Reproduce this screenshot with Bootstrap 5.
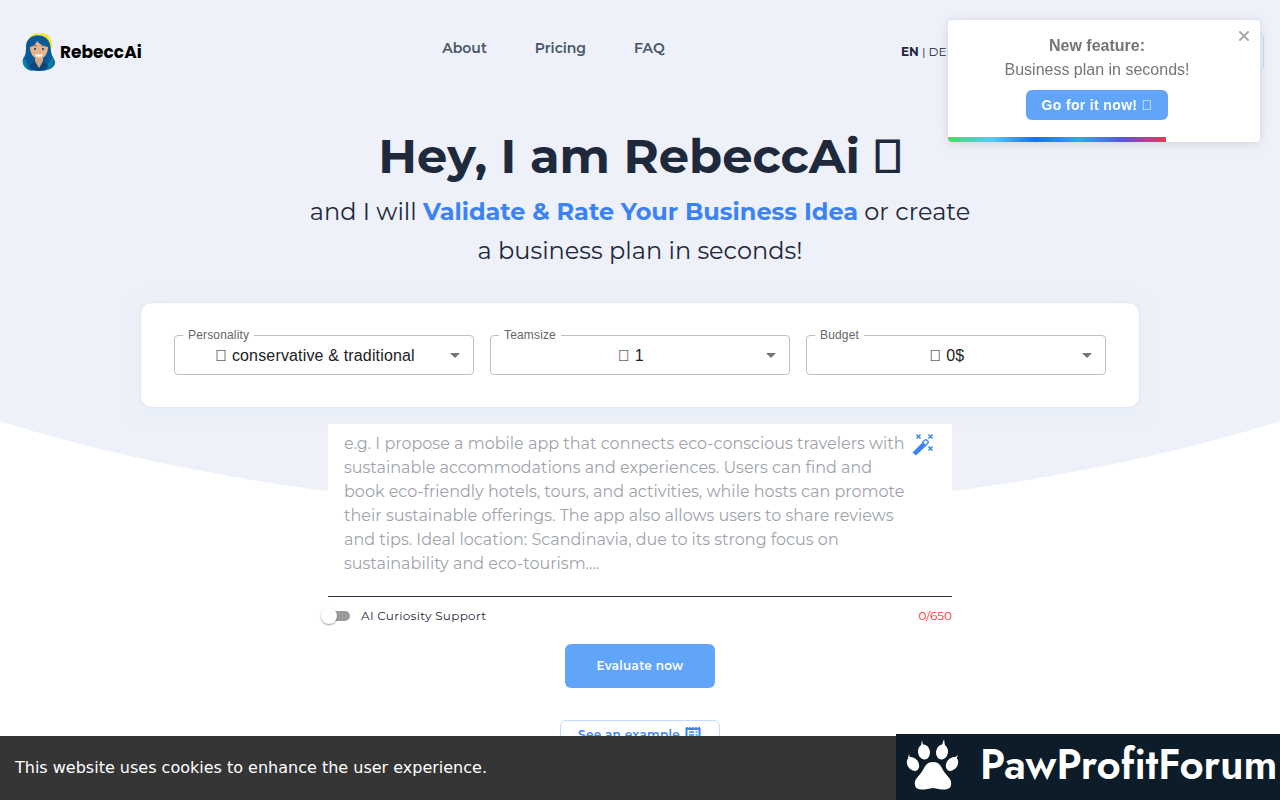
<!DOCTYPE html>
<html lang="en">
<head>
<meta charset="utf-8">
<meta name="viewport" content="width=device-width, initial-scale=1">
<title>RebeccAi</title>
<link href="https://cdn.jsdelivr.net/npm/bootstrap@5.3.0/dist/css/bootstrap.min.css" rel="stylesheet">
<style>
  body { font-family: Montserrat, Inter, sans-serif; color: #1e293b; background: #fff; }
  .page { position: relative; isolation: isolate; min-height: 100vh; }
  .page::before { content: ""; position: absolute; inset: 0 0 auto; height: 511px; z-index: -1; background: #eef1f9; clip-path: ellipse(88.3% 511px at 50% 0); }
  .site-header { height: 104px; }
  .brand-link { width: 190px; padding-left: 6px; gap: 4px; color: #000; font: 700 17px/24px Poppins, Inter, sans-serif; }
  .main-nav { gap: 48px; font-size: 14px; line-height: 24px; font-weight: 600; margin-bottom: 8px; }
  .main-nav a { color: #475569; }
  .account-area { width: 363px; font-size: 12px; }
  .account-area a { color: #1e293b; }
  .btn-account { width: 112px; height: 38px; border: 1px solid #bfdbfe; border-radius: 6px; }
  .arimo { font-family: "Liberation Sans", Arial, sans-serif; }
  .headline { font-size: 48px; line-height: 56px; font-weight: 700; }
  .subline { font-size: 24px; line-height: 39px; max-width: 670px; }
  .subline strong { color: #3b82f6; }
  .options-card { max-width: 1000px; margin-top: 32px; padding: 32px 33px; border: 1px solid #e2e6ee; border-radius: 12px; box-shadow: 0 4px 16px #dbeafe80; letter-spacing: .01em; }
  .options-card .col { position: relative; }
  .options-card label { position: absolute; top: -9px; left: 17px; padding: 0 5px; background: #fff; color: #666; font-size: 12px; line-height: 18px; }
  .options-card select { height: 40px; padding: 2px 32px 0 14px; border: 1px solid #c0c0c0; border-radius: 4px; color: #212121; font-size: 16px; letter-spacing: inherit; text-align-last: center; background-image: url("data:image/svg+xml,%3Csvg xmlns='http://www.w3.org/2000/svg' viewBox='0 0 24 24'%3E%3Cpath fill='%23757575' d='M7 10l5 5 5-5z'/%3E%3C/svg%3E"); background-size: 24px; background-position: right 6px center; }
  .idea-form { max-width: 624px; }
  .idea-form textarea { height: 173px; padding: 8px 40px 0 16px; border: 0; border-bottom: 1px solid #2c2c46; border-radius: 0; resize: none; overflow: hidden; font-size: 16px; line-height: 24px; }
  .idea-form textarea::placeholder { color: #a0a3ab; }
  .btn-wand { top: 8px; right: 17px; width: 24px; height: 24px; line-height: 0; }
  .form-notes { font-size: 12px; line-height: 24px; padding-top: 7px; }
  .curiosity { appearance: none; position: relative; width: 28px; height: 10px; margin: 0 11px 0 -6px; border-radius: 5px; background: #9b9b9b; }
  .curiosity::before { content: ""; position: absolute; left: -1px; top: -3px; width: 16px; height: 16px; border-radius: 50%; background: #fff; box-shadow: 0 1px 2px #0006; }
  .curiosity:checked::before { left: 13px; }
  .counter { color: #ff2a2a; }
  .btn-soft, .btn-example, .form-notes label { letter-spacing: .025em; }
  .btn-soft { background: #60a5fa; color: #fff; border: 0; border-radius: 6px; }
  .btn-evaluate { width: 150px; height: 44px; font-size: 12px; font-weight: 600; }
  .btn-example { width: 160px; height: 40px; margin-top: 32px; padding: 2px 0 0; border: 1px solid #bfdbfe; border-radius: 6px; color: #3b82f6; background: #fff; font-size: 12px; line-height: 24px; font-weight: 600; }
  .feature-toast { width: 312px; padding: 14px 14px 22px 0; margin: 20px; color: #757575; background: #fff; border-radius: 4px; box-shadow: 0 1px 10px #0000001a, 0 2px 15px #0000000d; font-size: 16px; line-height: 24px; z-index: 1090; overflow: hidden; }
  .feature-toast .btn-soft { width: 142px; height: 30px; margin-top: 8px; font-size: 14px; font-weight: 700; }
  .btn-dismiss { top: 9px; right: 9px; width: 14px; height: 14px; line-height: 0; }
  .toast-timer { left: 0; bottom: 0; height: 5px; background: linear-gradient(to right, #4cd964, #5ac8fa, #007aff, #34aadc, #5856d6, #ff2d55); }
  .cookie-bar { height: 64px; padding-left: 15px; background: #353535; color: #fff; font: 16px/24px "DejaVu Sans", sans-serif; }
  .forum-mark { width: 384px; height: 66px; gap: 21px; padding: 0 0 4px 10px; background: #0c1c28; color: #fff; font: 600 42px/48px Jost, Lato, sans-serif; z-index: 1040; }
</style>
</head>
<body>
<div class="page">
  <header class="site-header container-fluid px-3 d-flex align-items-center justify-content-between">
    <a class="brand-link d-flex align-items-center text-decoration-none" href="#">
      <svg width="34" height="40" viewBox="0 0 34 40" aria-hidden="true">
        <path d="M16 2C24-1 31 4 30 16l-3 2L24 7z" fill="#f8e43c"/>
        <path d="M5 10Q8 1 17 1l-3 4z" fill="#f8e43c"/>
        <path d="M4 14C5 0 25 0 28 12c1 6 1 11 4 15 4 7-4 12-15 12S-1 34 1 27c3-4 3-8 3-13z" fill="#075b97"/>
        <path d="M2 25q3 6 4 11l6 3q-7 0-10-5-2-4 0-9M31 25q2 8-3 12l-7 2 5-7z" fill="#0a7fa6"/>
        <path d="M13 23h8v7l-4 6-4-6z" fill="#d9a67d"/>
        <path d="M8 15q5-1 7-6 4 5 11 6c0 7-4 12-9 12S8 22 8 15z" fill="#e8b48c"/>
        <path d="M8 33l5-4 4 8 4-8 5 4-1 4q-8 3-16 0z" fill="#08477c"/>
        <path d="M11 14q2-1 4 0m4 0q2-1 4 0" stroke="#7d6b60" fill="none"/>
        <circle cx="13" cy="17" r="1" fill="#18364f"/><circle cx="21" cy="17" r="1" fill="#18364f"/>
        <path d="M13 22q4 1 8 0-1 3-4 3t-4-3z" fill="#fff"/>
      </svg>
      <span>RebeccAi</span>
    </a>
    <nav class="main-nav d-flex" aria-label="Main">
      <a class="text-decoration-none" href="#">About</a>
      <a class="text-decoration-none" href="#">Pricing</a>
      <a class="text-decoration-none" href="#">FAQ</a>
    </nav>
    <div class="account-area d-flex align-items-center justify-content-between">
      <div><a class="text-decoration-none fw-bold" href="#">EN</a> | <a class="text-decoration-none" href="#">DE</a></div>
      <button class="btn btn-account" type="button" aria-label="Account"></button>
    </div>
  </header>

  <main class="container-fluid px-3 text-center">
    <div class="pt-4">
      <h1 class="headline mb-2">Hey, I am RebeccAi &#xF8F0;</h1>
      <p class="subline mx-auto mb-0">and I will <strong>Validate &amp; Rate Your Business Idea</strong> or create a business plan in seconds!</p>
    </div>

    <section class="options-card bg-white arimo mx-auto mb-3">
      <div class="row row-cols-3 gx-3">
        <div class="col"><select class="form-select" id="personality"><option>&#xF8F0; conservative &amp; traditional</option></select><label for="personality">Personality</label></div>
        <div class="col"><select class="form-select" id="teamsize"><option>&#xF8F0; 1</option></select><label for="teamsize">Teamsize</label></div>
        <div class="col"><select class="form-select" id="budget"><option>&#xF8F0; 0$</option></select><label for="budget">Budget</label></div>
      </div>
    </section>

    <form class="idea-form mx-auto">
      <div class="position-relative">
        <textarea class="form-control" aria-label="Business idea" placeholder="e.g. I propose a mobile app that connects eco-conscious travelers with sustainable accommodations and experiences. Users can find and book eco-friendly hotels, tours, and activities, while hosts can promote their sustainable offerings. The app also allows users to share reviews and tips. Ideal location: Scandinavia, due to its strong focus on sustainability and eco-tourism...."></textarea>
        <button class="btn btn-wand position-absolute border-0 p-0" type="button" aria-label="Improve idea">
          <svg width="24" height="24" viewBox="0 0 24 24" fill="none" stroke="#3b82f6" aria-hidden="true">
            <path d="M1.500 20.500L12 10l3.500 3.500L5 23.500z" fill="#3b82f6" stroke="none"/>
            <path d="M11.500 10.500L14 8q.8-.8 1.600 0l1.400 1.400q.8.800 0 1.600l-2.500 2.500" stroke-width="1.300"/>
            <path d="M5.500 2.500l4 4m0-4l-4 4M17.500 2.500l4 4m0-4l-4 4M17.500 14.500l4 4m0-4l-4 4" stroke-width="1.500"/>
          </svg>
        </button>
      </div>
      <div class="form-notes d-flex align-items-center justify-content-between">
        <div class="d-flex align-items-center"><input class="curiosity" type="checkbox" role="switch" id="curiosity"><label for="curiosity">AI Curiosity Support</label></div>
        <span class="counter">0/650</span>
      </div>
      <button class="btn btn-soft btn-evaluate mt-3" type="button">Evaluate now</button>
    </form>
    <button class="btn btn-example d-inline-flex justify-content-center" type="button">
      <span>See an example</span>
      <svg class="ms-1" width="18" height="20" viewBox="0 0 18 20" aria-hidden="true">
        <path d="M1.500 5l1.500-1.200L4.500 5 6 3.800 7.500 5 9 3.800 10.500 5 12 3.800 13.500 5 15 3.800 16.500 5v14h-15z" fill="#3b82f6"/>
        <path d="M3.500 7h11v10h-11z" fill="#fff"/>
        <path d="M5 9h5M5 12h5M5 15h5M11.500 9h2M11.500 12h2M11.500 15h2" stroke="#3b82f6" stroke-width="1.500"/>
      </svg>
    </button>
  </main>
</div>

<aside class="feature-toast arimo text-center position-fixed top-0 end-0" role="status">
  <strong class="d-block">New feature:</strong>
  <span class="d-block">Business plan in seconds!</span>
  <button class="btn btn-soft p-0" type="button">Go for it now! &#xF8F0;</button>
  <button class="btn btn-dismiss position-absolute border-0 p-0" type="button" aria-label="Close">
    <svg width="14" height="14" viewBox="0 0 14 14" aria-hidden="true"><path d="M3 3l8 8m0-8l-8 8" stroke="#aaa" stroke-width="2" stroke-linecap="round"/></svg>
  </button>
  <div class="toast-timer position-absolute" style="width:70%"></div>
</aside>

<div class="cookie-bar fixed-bottom d-flex align-items-center">This website uses cookies to enhance the user experience.</div>
<div class="forum-mark position-fixed bottom-0 end-0 d-flex align-items-center">
  <svg width="53" height="53" viewBox="0 0 53 53" fill="#fff" aria-hidden="true">
    <path d="M27 23c-8 0-8 6-12 11s-7 7-6 12c1 6 9 5 18 3 9 2 17 3 18-3 1-5-2-7-6-12s-4-11-12-11z"/>
    <ellipse cx="18" cy="13" rx="6" ry="7.500" transform="rotate(-8 18 13)"/>
    <ellipse cx="36" cy="13" rx="6" ry="7.500" transform="rotate(8 36 13)"/>
    <ellipse cx="7" cy="25" rx="5.500" ry="7.500" transform="rotate(-35 7 25)"/>
    <ellipse cx="46" cy="25" rx="5.500" ry="7.500" transform="rotate(35 46 25)"/>
    <path d="M15 7l1-6 1 5zM36 6l2-6 1 7zM2 19l1-4 1 4zM48 19l4-3-2 5z"/>
  </svg>
  <span>PawProfitForum</span>
</div>
<script src="https://cdn.jsdelivr.net/npm/bootstrap@5.3.0/dist/js/bootstrap.bundle.min.js"></script>
</body>
</html>
